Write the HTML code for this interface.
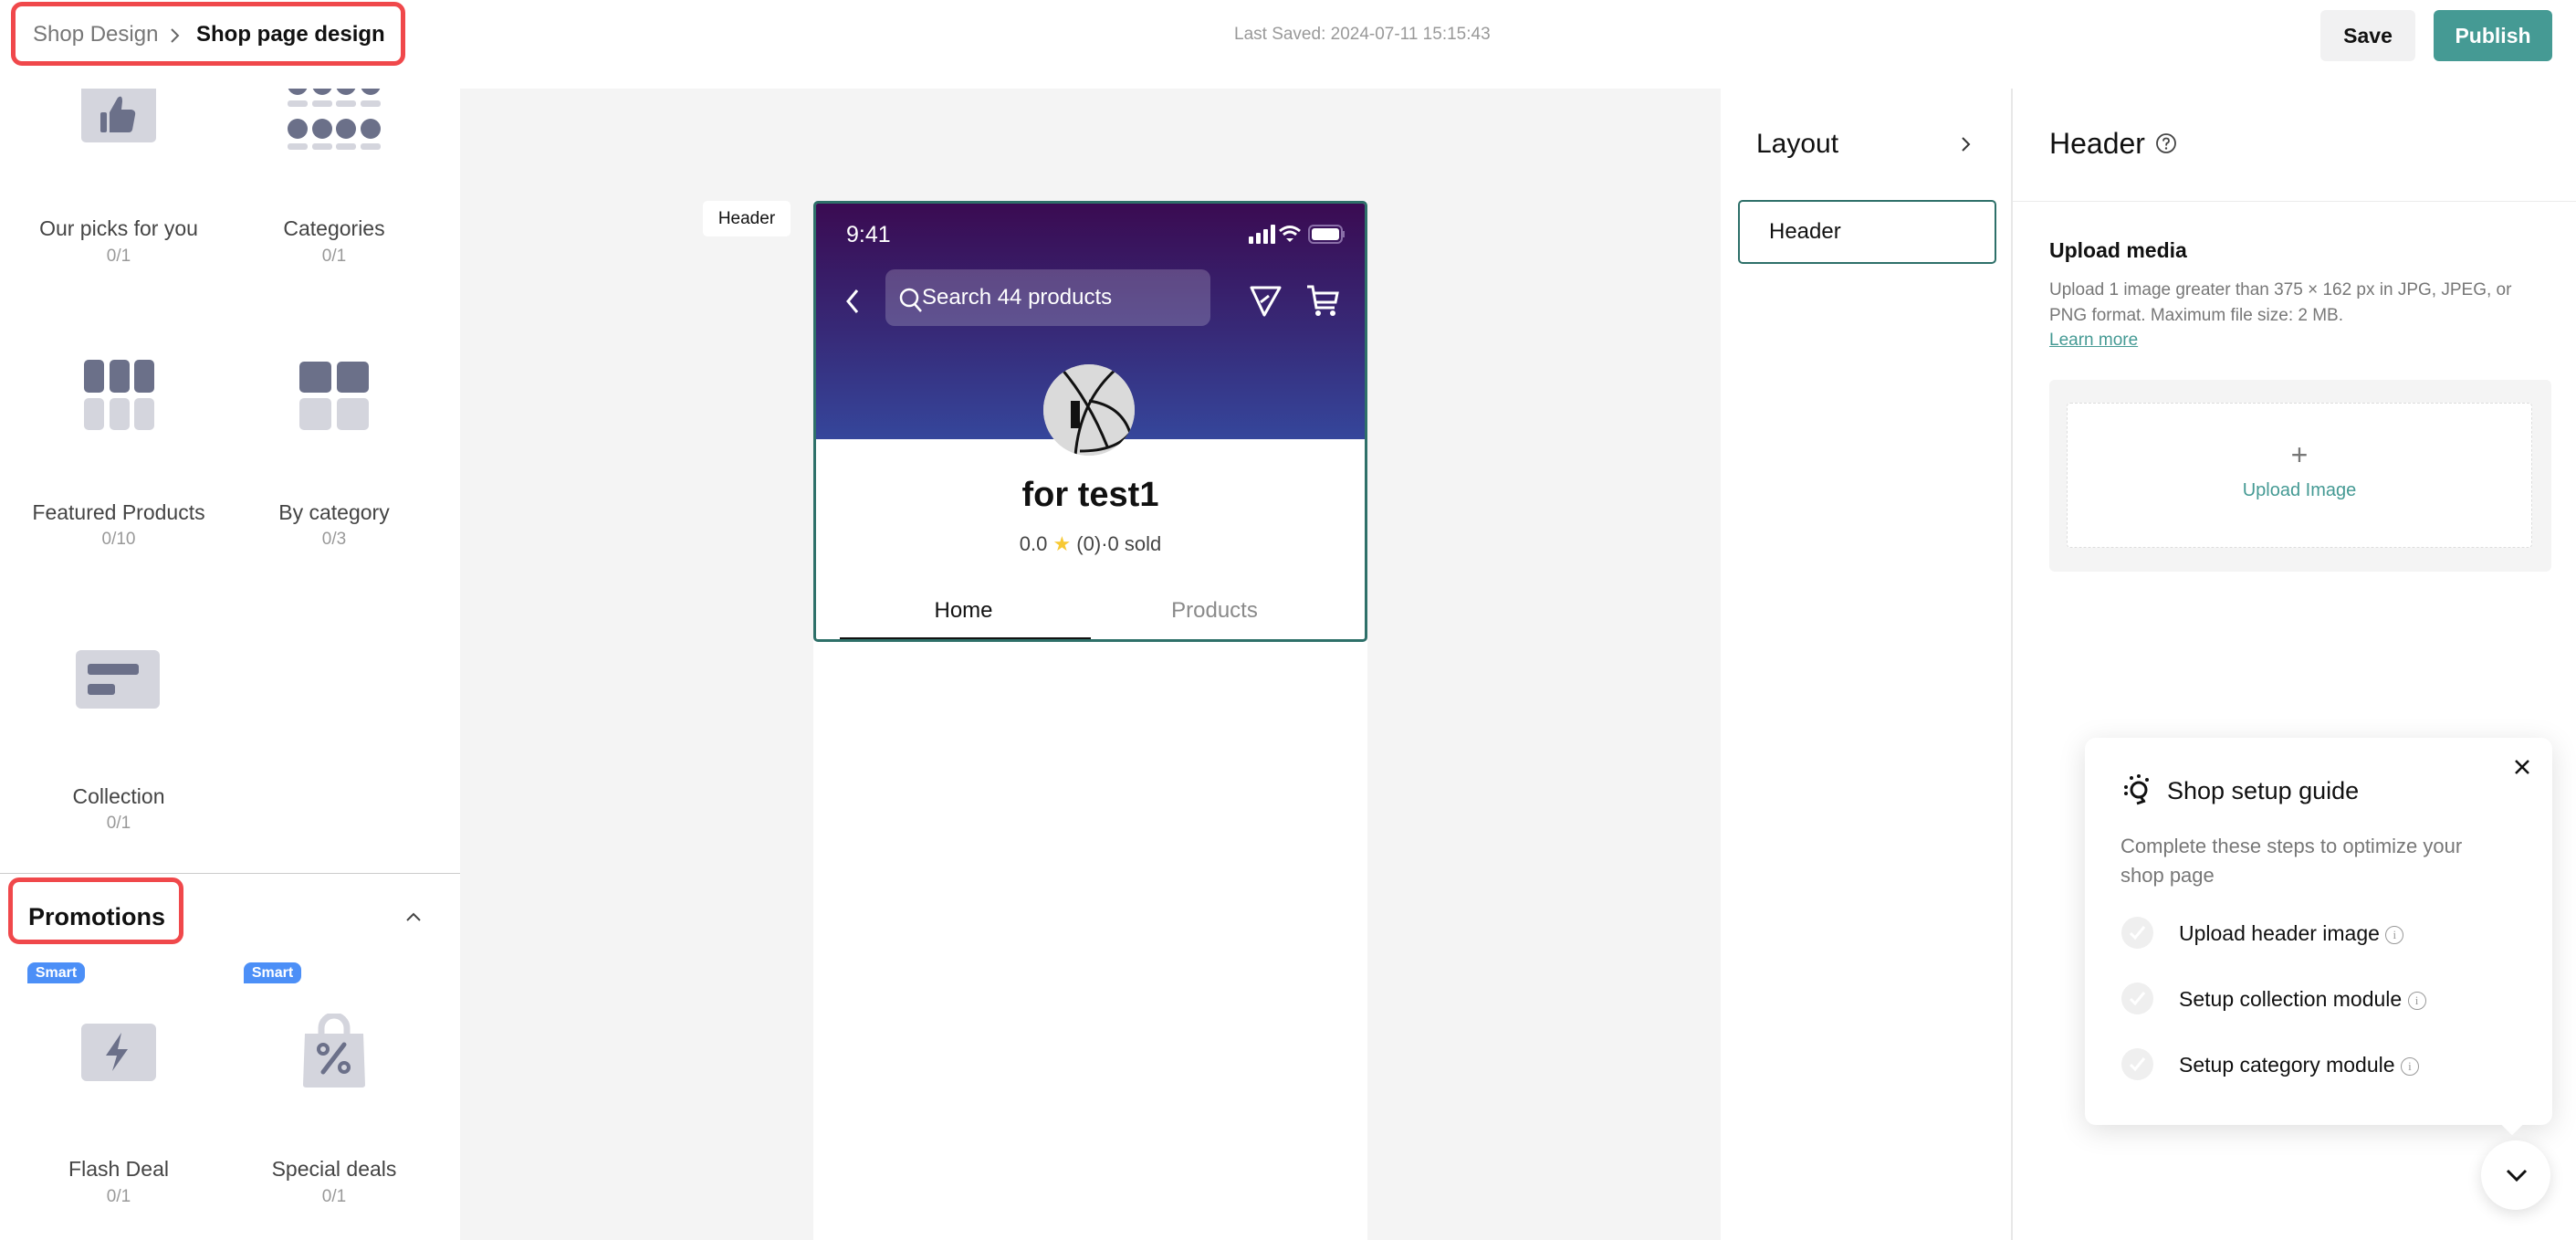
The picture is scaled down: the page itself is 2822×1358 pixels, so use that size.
<!DOCTYPE html>
<html><head><meta charset="utf-8"><style>
*{margin:0;padding:0;box-sizing:border-box}
body{width:2822px;height:1358px;overflow:hidden;background:#fff;font-family:"Liberation Sans",Arial,sans-serif;position:relative;color:#161823}
.a{position:absolute}
.lbl{position:absolute;width:236px;text-align:center;font-size:23px;color:#444;}
.sub{position:absolute;width:236px;text-align:center;font-size:19px;color:#999;}
.btn{position:absolute;border-radius:6px;font-size:23px;display:flex;align-items:center;justify-content:center;font-weight:bold}
.ck{position:absolute;width:35px;height:35px;border-radius:50%;background:#efefef}
.ck svg{position:absolute;left:8px;top:9px}
.inf{display:inline-block;width:20px;height:20px;border:1.5px solid #999;border-radius:50%;font-size:13px;color:#999;text-align:center;line-height:17px;vertical-align:middle;font-family:'Liberation Serif',serif}
</style></head><body>

<!-- left sidebar icons (top, partially scrolled) -->
<div class="a" style="left:89px;top:97px;width:82px;height:59px;background:#d4d5dd;border-radius:0 0 5px 5px"></div>
<svg class="a" style="left:107px;top:103px" width="46" height="44" viewBox="0 0 46 44"><rect x="3" y="20" width="7" height="22" rx="2" fill="#6b7089"/><path d="M13 20 L22 4 Q27 0 27 8 L26 17 L37 17 Q42 18 41 23 L38 39 Q37 42 34 42 L13 42Z" fill="#6b7089"/></svg>
<svg class="a" style="left:315px;top:82px" width="110" height="90" viewBox="315 82 110 90">
 <g fill="#6b7089"><circle cx="326" cy="93" r="11"/><circle cx="353" cy="93" r="11"/><circle cx="379" cy="93" r="11"/><circle cx="406" cy="93" r="11"/>
 <circle cx="326" cy="141" r="11"/><circle cx="353" cy="141" r="11"/><circle cx="379" cy="141" r="11"/><circle cx="406" cy="141" r="11"/></g>
 <g fill="#d4d5dd"><rect x="315" y="110" width="22" height="7" rx="3"/><rect x="342" y="110" width="22" height="7" rx="3"/><rect x="368" y="110" width="22" height="7" rx="3"/><rect x="395" y="110" width="22" height="7" rx="3"/>
 <rect x="315" y="157" width="22" height="7" rx="3"/><rect x="342" y="157" width="22" height="7" rx="3"/><rect x="368" y="157" width="22" height="7" rx="3"/><rect x="395" y="157" width="22" height="7" rx="3"/></g></svg>
<div class="a" style="left:0;top:0;width:504px;height:97px;background:#fff"></div>

<!-- top bar -->
<div class="a" style="left:12px;top:2px;width:432px;height:70px;border:5px solid #f0484b;border-radius:12px"></div>
<div class="a" style="left:36px;top:24px;font-size:24px;color:#777">Shop Design</div>
<svg class="a" style="left:184px;top:30px" width="14" height="18" viewBox="0 0 14 18"><path d="M4 2l7 7-7 7" fill="none" stroke="#666" stroke-width="2"/></svg>
<div class="a" style="left:215px;top:24px;font-size:24px;color:#111;font-weight:bold">Shop page design</div>
<div class="a" style="left:1352px;top:27px;font-size:19px;color:#999">Last Saved: 2024-07-11 15:15:43</div>
<div class="btn" style="left:2542px;top:11px;width:104px;height:56px;background:#f1f1f2;color:#111">Save</div>
<div class="btn" style="left:2666px;top:11px;width:130px;height:56px;background:#459a94;color:#fff">Publish</div>

<div class="lbl" style="left:12px;top:237px">Our picks for you</div><div class="sub" style="left:12px;top:270px">0/1</div>
<div class="lbl" style="left:248px;top:237px">Categories</div><div class="sub" style="left:248px;top:270px">0/1</div>

<svg class="a" style="left:92px;top:394px" width="78" height="78" viewBox="0 0 78 78"><g fill="#6b7089"><rect x="0" y="0" width="22" height="36" rx="5"/><rect x="28" y="0" width="22" height="36" rx="5"/><rect x="55" y="0" width="22" height="36" rx="5"/></g><g fill="#d4d5dd"><rect x="0" y="42" width="22" height="35" rx="5"/><rect x="28" y="42" width="22" height="35" rx="5"/><rect x="55" y="42" width="22" height="35" rx="5"/></g></svg>
<svg class="a" style="left:328px;top:396px" width="78" height="76" viewBox="0 0 78 76"><g fill="#6b7089"><rect x="0" y="0" width="35" height="34" rx="5"/><rect x="41" y="0" width="35" height="34" rx="5"/></g><g fill="#d4d5dd"><rect x="0" y="40" width="35" height="35" rx="5"/><rect x="41" y="40" width="35" height="35" rx="5"/></g></svg>
<div class="lbl" style="left:12px;top:548px">Featured Products</div><div class="sub" style="left:12px;top:580px">0/10</div>
<div class="lbl" style="left:248px;top:548px">By category</div><div class="sub" style="left:248px;top:580px">0/3</div>

<svg class="a" style="left:83px;top:712px" width="92" height="65" viewBox="0 0 92 65"><rect width="92" height="64" rx="6" fill="#d4d5dd"/><rect x="13" y="15" width="56" height="12" rx="3" fill="#6b7089"/><rect x="13" y="37" width="30" height="12" rx="3" fill="#6b7089"/></svg>
<div class="lbl" style="left:12px;top:859px">Collection</div><div class="sub" style="left:12px;top:891px">0/1</div>

<div class="a" style="left:0;top:956px;width:504px;height:1px;background:#ccc"></div>
<div class="a" style="left:9px;top:961px;width:192px;height:73px;border:5px solid #f0484b;border-radius:12px"></div>
<div class="a" style="left:31px;top:989px;font-size:27px;font-weight:bold;color:#111">Promotions</div>
<svg class="a" style="left:444px;top:998px" width="18" height="12" viewBox="0 0 18 12"><path d="M2 10l7-7 7 7" fill="none" stroke="#444" stroke-width="2"/></svg>
<div class="a" style="left:30px;top:1054px;width:63px;height:23px;background:#4c8ff7;border-radius:8px 8px 8px 0;color:#fff;font-size:16px;font-weight:bold;text-align:center;line-height:23px">Smart</div>
<div class="a" style="left:267px;top:1054px;width:63px;height:23px;background:#4c8ff7;border-radius:8px 8px 8px 0;color:#fff;font-size:16px;font-weight:bold;text-align:center;line-height:23px">Smart</div>
<svg class="a" style="left:89px;top:1121px" width="82" height="64" viewBox="0 0 82 64"><rect width="82" height="63" rx="6" fill="#d4d5dd"/><path d="M44 10 L27 35 L39 35 L34 52 L51 28 L40 28Z" fill="#6b7089"/></svg>
<svg class="a" style="left:330px;top:1110px" width="72" height="82" viewBox="0 0 72 82"><path d="M22 22 V16 A14 14 0 0 1 50 16 V22" fill="none" stroke="#d4d5dd" stroke-width="7"/><path d="M4 22 H68 L70 78 Q70 81 66 81 H6 Q2 81 2 78Z" fill="#d4d5dd"/><circle cx="24" cy="39" r="5" fill="none" stroke="#6b7089" stroke-width="4"/><circle cx="47" cy="59" r="5" fill="none" stroke="#6b7089" stroke-width="4"/><path d="M47 34 L24 64" stroke="#6b7089" stroke-width="5" stroke-linecap="round"/></svg>
<div class="lbl" style="left:12px;top:1267px">Flash Deal</div><div class="sub" style="left:12px;top:1300px">0/1</div>
<div class="lbl" style="left:248px;top:1267px">Special deals</div><div class="sub" style="left:248px;top:1300px">0/1</div>

<!-- canvas -->
<div class="a" style="left:504px;top:97px;width:1381px;height:1261px;background:#f4f4f4"></div>
<div class="a" style="left:770px;top:220px;width:96px;height:39px;background:#fff;border-radius:5px;font-size:19px;text-align:center;line-height:39px;color:#111">Header</div>
<div class="a" style="left:891px;top:220px;width:607px;height:1138px;background:#fff"></div>
<div class="a" style="left:891px;top:220px;width:607px;height:483px;border:3px solid #2e7069;border-radius:5px;overflow:hidden;background:#fff">
 <div class="a" style="left:0;top:0;width:601px;height:258px;background:linear-gradient(#3a0b52,#372a78 55%,#35469b)"></div>
 <div class="a" style="left:33px;top:20px;font-size:25px;color:#fff">9:41</div>
 <svg class="a" style="left:472px;top:22px" width="110" height="24" viewBox="0 0 110 24"><g fill="#fff"><rect x="2" y="14" width="5" height="8" rx="1"/><rect x="10" y="10" width="5" height="12" rx="1"/><rect x="18" y="6" width="5" height="16" rx="1"/><rect x="26" y="1" width="5" height="21" rx="1"/></g>
 <path d="M36 8 Q47 -1 58 8 M40 12 Q47 6 54 12" fill="none" stroke="#fff" stroke-width="3"/><path d="M43 16 L47 20 L51 16Z" fill="#fff"/>
 <rect x="68" y="2" width="36" height="19" rx="5" fill="none" stroke="#8a6fa8" stroke-width="2"/><rect x="71" y="5" width="30" height="13" rx="3" fill="#fff"/><rect x="105" y="8" width="2" height="7" fill="#8a6fa8"/></svg>
 <svg class="a" style="left:30px;top:92px" width="20" height="30" viewBox="0 0 20 30"><path d="M15 3 L5 15 L15 27" fill="none" stroke="#fff" stroke-width="3"/></svg>
 <div class="a" style="left:76px;top:72px;width:356px;height:62px;background:rgba(255,255,255,.2);border-radius:10px"></div>
 <svg class="a" style="left:90px;top:91px" width="28" height="30" viewBox="0 0 28 30"><circle cx="12" cy="12" r="9" fill="none" stroke="#fff" stroke-width="2.5"/><path d="M18 19 L25 27" stroke="#fff" stroke-width="2.5"/></svg>
 <div class="a" style="left:116px;top:89px;font-size:24px;color:#fff">Search 44 products</div>
 <svg class="a" style="left:474px;top:88px" width="38" height="38" viewBox="0 0 38 38"><path d="M3 4 L34 4 L17 34 Z M13 20 L22 13" fill="none" stroke="#fff" stroke-width="3" stroke-linejoin="round"/></svg>
 <svg class="a" style="left:537px;top:88px" width="38" height="38" viewBox="0 0 38 38"><path d="M1 3 H7 L11 26 H31 M9 10 H34 L32 20 H11" fill="none" stroke="#fff" stroke-width="3"/><circle cx="13" cy="32" r="3" fill="#fff"/><circle cx="29" cy="32" r="3" fill="#fff"/></svg>
 <div class="a" style="left:249px;top:176px;width:100px;height:100px;border-radius:50%;background:#d9d9d9;overflow:hidden">
  <svg width="100" height="100" viewBox="0 0 100 100"><rect width="100" height="100" fill="#dadada"/><path d="M20 5 Q50 40 70 90 M80 5 Q40 40 35 100 M50 40 Q85 45 95 75 Q80 95 40 95" fill="none" stroke="#111" stroke-width="3"/><rect x="30" y="40" width="10" height="30" fill="#111"/></svg>
 </div>
 <div class="a" style="left:0;top:298px;width:601px;text-align:center;font-size:38px;font-weight:bold;color:#111">for test1</div>
 <div class="a" style="left:0;top:360px;width:601px;text-align:center;font-size:22px;color:#444">0.0 <span style="color:#f7c934">★</span> (0)·0 sold</div>
 <div class="a" style="left:24px;top:432px;width:275px;text-align:center;font-size:24px;color:#111">Home</div>
 <div class="a" style="left:299px;top:432px;width:275px;text-align:center;font-size:24px;color:#8a8a8a">Products</div>
 <div class="a" style="left:26px;top:475px;width:275px;height:3px;background:#111"></div>
</div>

<!-- layout panel -->
<div class="a" style="left:1885px;top:97px;width:318px;height:1261px;background:#fff"></div>
<div class="a" style="left:1924px;top:141px;font-size:30px;color:#111">Layout</div>
<svg class="a" style="left:2146px;top:148px" width="14" height="20" viewBox="0 0 14 20"><path d="M4 3l7 7-7 7" fill="none" stroke="#333" stroke-width="2"/></svg>
<div class="a" style="left:1904px;top:219px;width:283px;height:70px;border:2px solid #2e7069;border-radius:5px;font-size:24px;padding-left:32px;line-height:66px;color:#111">Header</div>
<div class="a" style="left:2203px;top:97px;width:2px;height:1261px;background:#e8e8e8"></div>

<!-- right panel -->
<div class="a" style="left:2245px;top:139px;font-size:32px;color:#111">Header</div>
<svg class="a" style="left:2361px;top:145px" width="24" height="24" viewBox="0 0 24 24"><circle cx="12" cy="12" r="10" fill="none" stroke="#444" stroke-width="1.8"/><path d="M9 9.5 Q9 6.5 12 6.5 Q15 6.5 15 9.2 Q15 11 12.5 12 L12 14.5" fill="none" stroke="#444" stroke-width="1.8"/><circle cx="12" cy="17.5" r="1.2" fill="#444"/></svg>
<div class="a" style="left:2205px;top:220px;width:617px;height:1px;background:#ececec"></div>
<div class="a" style="left:2245px;top:261px;font-size:23px;font-weight:bold;color:#111">Upload media</div>
<div class="a" style="left:2245px;top:304px;width:540px;font-size:19px;line-height:28px;color:#777">Upload 1 image greater than 375 × 162 px in JPG, JPEG, or PNG format. Maximum file size: 2 MB.</div>
<div class="a" style="left:2245px;top:362px;font-size:19px;color:#459a94;text-decoration:underline">Learn more</div>
<div class="a" style="left:2245px;top:416px;width:550px;height:210px;background:#f4f4f4;border-radius:6px"></div>
<div class="a" style="left:2264px;top:441px;width:510px;height:159px;background:#fff;border:1px dashed #ddd;border-radius:4px"></div>
<div class="a" style="left:2264px;top:480px;width:510px;text-align:center;font-size:32px;color:#777;font-weight:lighter">+</div>
<div class="a" style="left:2264px;top:526px;width:510px;text-align:center;font-size:20px;color:#459a94">Upload Image</div>

<!-- guide card -->
<div class="a" style="left:2284px;top:808px;width:512px;height:424px;background:#fff;border-radius:12px;box-shadow:0 6px 30px rgba(0,0,0,.13)"></div>
<div class="a" style="left:2744px;top:1224px;width:16px;height:16px;background:#fff;transform:rotate(45deg)"></div>
<svg class="a" style="left:2325px;top:848px" width="32" height="36" viewBox="0 0 32 36"><circle cx="18" cy="17" r="8" fill="none" stroke="#111" stroke-width="3"/><path d="M20 24 L23 29 M16 32 L25 29" stroke="#111" stroke-width="3"/><circle cx="4" cy="14" r="2" fill="#111"/><circle cx="4" cy="21" r="2" fill="#111"/><circle cx="10" cy="4" r="2" fill="#111"/><circle cx="18" cy="2" r="2" fill="#111"/><circle cx="27" cy="6" r="2" fill="#111"/></svg>
<div class="a" style="left:2374px;top:851px;font-size:27px;color:#111">Shop setup guide</div>
<svg class="a" style="left:2753px;top:830px" width="20" height="20" viewBox="0 0 20 20"><path d="M3 3l14 14M17 3L3 17" stroke="#111" stroke-width="2.5"/></svg>
<div class="a" style="left:2323px;top:911px;width:412px;font-size:22px;line-height:32px;color:#777">Complete these steps to optimize your shop page</div>
<div class="ck" style="left:2324px;top:1004px"><svg width="19" height="17" viewBox="0 0 19 17"><path d="M2 9l5 5 10-12" fill="none" stroke="#fff" stroke-width="3"/></svg></div>
<div class="ck" style="left:2324px;top:1076px"><svg width="19" height="17" viewBox="0 0 19 17"><path d="M2 9l5 5 10-12" fill="none" stroke="#fff" stroke-width="3"/></svg></div>
<div class="ck" style="left:2324px;top:1148px"><svg width="19" height="17" viewBox="0 0 19 17"><path d="M2 9l5 5 10-12" fill="none" stroke="#fff" stroke-width="3"/></svg></div>
<div class="a" style="left:2387px;top:1009px;font-size:23px;color:#111">Upload header image <span class="inf">i</span></div>
<div class="a" style="left:2387px;top:1081px;font-size:23px;color:#111">Setup collection module <span class="inf">i</span></div>
<div class="a" style="left:2387px;top:1153px;font-size:23px;color:#111">Setup category module <span class="inf">i</span></div>
<div class="a" style="left:2718px;top:1249px;width:76px;height:76px;border-radius:50%;background:#fff;box-shadow:0 4px 16px rgba(0,0,0,.13)"></div>
<svg class="a" style="left:2745px;top:1280px" width="24" height="14" viewBox="0 0 24 14"><path d="M2 2l10 10 10-10" fill="none" stroke="#111" stroke-width="3"/></svg>
</body></html>
